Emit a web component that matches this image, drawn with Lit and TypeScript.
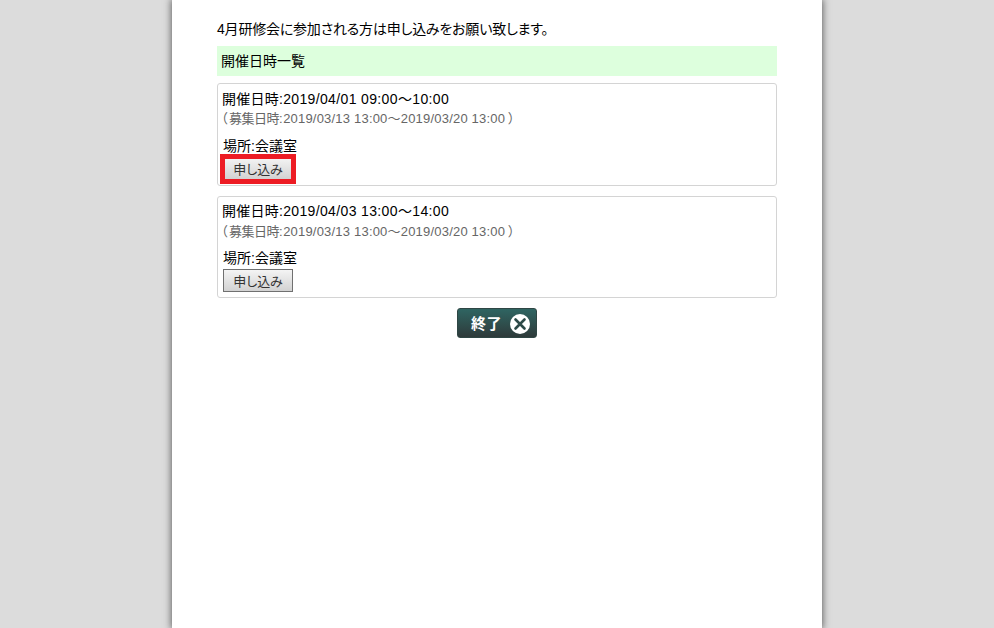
import { LitElement, html, css } from 'lit';
import { customElement } from 'lit/decorators.js';

const events = [
  { date: '2019/04/01 09:00〜10:00', selected: true },
  { date: '2019/04/03 13:00〜14:00', selected: false },
];

@customElement('app-root')
export class AppRoot extends LitElement {
  static styles = css`
    :host {
      display: block;
      height: 628px;
      overflow: hidden;
      background: #dcdcdc;
      font-family: "Liberation Sans", "Noto Sans CJK JP", sans-serif;
      font-size: 14px;
      font-feature-settings: "palt";
      color: #000;
    }
    .page {
      box-sizing: border-box;
      width: 650px;
      height: 628px;
      margin: 0 auto;
      padding: 21px 45px 0 45px;
      background: #fff;
      box-shadow: 0 0 7px 1px #666;
    }
    .intro { height: 25px; line-height: 17px; letter-spacing: -0.2px; }
    .title {
      height: 30px;
      line-height: 30px;
      padding-left: 4px;
      margin-bottom: 7px;
      background: #dfd;
    }
    .card {
      box-sizing: border-box;
      height: 102.5px;
      padding: 4.9px 5px 0;
      margin-bottom: 10px;
      border: 1px solid #d4d4d4;
      border-radius: 3px;
    }
    .date { height: 20.2px; line-height: 20px; text-indent: -1px; letter-spacing: 0.25px; }
    .date span { letter-spacing: 0.36px; }
    .period {
      height: 19px;
      line-height: 19px;
      font-size: 13px;
      color: #666;
      text-indent: -2px;
      letter-spacing: -0.5px;
    }
    .period .open { margin-right: 2px; }
    .period .range { letter-spacing: 0.2px; margin: 0 3px 0 1px; }
    .place { height: 20px; line-height: 20px; margin-top: 7.5px; }
    .action { position: relative; width: 70px; height: 23px; margin-top: 1px; }
    .apply {
      display: block;
      box-sizing: border-box;
      width: 70px;
      height: 23px;
      padding: 0;
      border: 1px solid #707070;
      background: linear-gradient(#f4f4f4, #d2d2d2);
      font: inherit;
      font-size: 13px;
      color: #333;
    }
    .marker {
      position: absolute;
      inset: -3px -3px -4px -3px;
      border: 5px solid #ed1c24;
    }
    .footer { display: flex; justify-content: center; }
    .close {
      box-sizing: border-box;
      display: flex;
      align-items: center;
      justify-content: space-between;
      width: 80px;
      height: 30px;
      padding: 0 6px 0 13px;
      border-radius: 3px;
      border: 1px solid #2f4644;
      background: linear-gradient(#2f6562, #2e3a3a);
      color: #fff;
      font-size: 15px;
      font-weight: 700;
      letter-spacing: 0.5px;
    }
    .close span { margin-bottom: 1px; }
    .close svg { display: block; margin-top: 2px; }
  `;

  render() {
    return html`
      <div class="page">
        <div class="intro">4月研修会に参加される方は申し込みをお願い致します。</div>
        <div class="title">開催日時一覧</div>
        ${events.map(
          (e) => html`
            <div class="card">
              <div class="date">開催日時:<span>${e.date}</span></div>
              <div class="period"><span class="open">（</span>募集日時:<span class="range">2019/03/13 13:00〜2019/03/20 13:00</span>）</div>
              <div class="place">場所:会議室</div>
              <div class="action">
                <button class="apply">申し込み</button>
                ${e.selected ? html`<div class="marker"></div>` : ''}
              </div>
            </div>
          `
        )}
        <div class="footer">
          <div class="close">
            <span>終了</span>
            <svg width="20" height="20" viewBox="0 0 20 20">
              <circle cx="10" cy="10" r="10" fill="#fff" />
              <path d="M5.5 5.5l9 9M14.5 5.5l-9 9" stroke="#2d4a48" stroke-width="2.6" stroke-linecap="round" />
            </svg>
          </div>
        </div>
      </div>
    `;
  }
}
